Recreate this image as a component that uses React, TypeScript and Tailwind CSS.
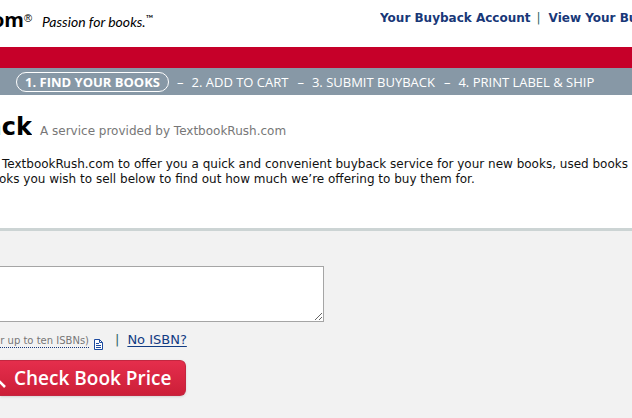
import { Fragment } from "react";

const steps = ["2. ADD TO CART", "3. SUBMIT BUYBACK", "4. PRINT LABEL & SHIP"];

const Header = () => (
    <header className="flex h-[47px] items-start justify-between overflow-hidden whitespace-nowrap bg-white">
        <div className="flex items-start text-black">
            <div className="flex w-6 shrink-0 justify-end overflow-hidden pt-2 font-['Open_Sans',sans-serif] text-xl leading-6 font-bold">om</div>
            <span className="w-[18px] pt-2 font-['Liberation_Sans',sans-serif] text-[11px] leading-5">®</span>
            <span className="pt-3 font-['Lato',sans-serif] text-sm leading-5 italic">Passion for books.</span>
            <span className="pt-2 font-['Lato',sans-serif] text-[10px] leading-5">™</span>
        </div>
        <nav className="flex w-[252px] shrink-0 overflow-hidden pt-[10px] text-xs leading-4 font-bold text-[#183878]">
            <a href="#account">Your Buyback Account</a>
            <span className="pr-2 pl-[6px] font-normal text-[#2e6468]">|</span>
            <a href="#cart">View Your Buyback</a>
        </nav>
    </header>
);

const StepBar = () => (
    <ol className="flex h-[27px] items-center gap-2 overflow-hidden whitespace-nowrap bg-[#8798a6] pl-4 font-['Open_Sans',sans-serif] text-[13px] leading-5 text-white">
        <li className="flex h-5 items-center rounded-full border border-white px-2 font-bold">1. FIND YOUR BOOKS</li>
        {steps.map((step) => (
            <Fragment key={step}>
                <li aria-hidden="true">–</li>
                <li className="pr-px">{step}</li>
            </Fragment>
        ))}
    </ol>
);

const NotesIcon = () => (
    <svg width="9" height="11" viewBox="0 0 9 11" fill="none" stroke="#1c4ba0" className="shrink-0" aria-hidden="true">
        <path d="M.5.5h5l3 3v7h-8z" fill="#fff" />
        <path d="M5.5.5v3h3M2 4.5h3M2 6.5h5M2 8.5h5" />
    </svg>
);

const Intro = () => (
    <section className="h-[133px] overflow-hidden whitespace-nowrap bg-white pt-4">
        <div className="flex items-baseline gap-2">
            <h1 className="flex w-8 shrink-0 justify-end overflow-hidden text-2xl leading-8 font-bold text-black">ack</h1>
            <span className="text-xs leading-4 text-[#777]">A service provided by TextbookRush.com</span>
        </div>
        <p className="pt-[14px] text-xs leading-[15px] text-[#111]">
            <span className="block pl-[2px]">TextbookRush.com to offer you a quick and convenient buyback service for your new books, used books</span>
            <span className="-ml-px block">oks you wish to sell below to find out how much we’re offering to buy them for.</span>
        </p>
    </section>
);

const IsbnForm = () => (
    <form className="flex-1 border-t-[3px] border-[#ccd4d4] bg-[#f2f2f2] pt-[35px]" onSubmit={(e) => e.preventDefault()}>
        <textarea
            id="isbns"
            aria-labelledby="isbn-hint"
            className="block h-14 w-[324px] max-w-full resize border border-l-0 border-[#a5a5a5] bg-white p-1 text-xs outline-none"
        />
        <div className="flex h-[38px] items-center whitespace-nowrap pb-[2px] text-[13px] leading-4">
            <div className="flex w-[89px] shrink-0 justify-end overflow-hidden pt-[2px]">
                <label id="isbn-hint" htmlFor="isbns" className="border-b border-dotted border-[#183878] text-[10px] leading-3 text-[#777]">r up to ten ISBNs)</label>
            </div>
            <span className="flex pt-2 pl-[5px]"><NotesIcon /></span>
            <span className="pl-3 text-[#2e6468]">|</span>
            <a href="#no-isbn" className="pl-2 text-[#123c83] underline underline-offset-2">No ISBN?</a>
        </div>
        <button
            type="submit"
            className="flex h-9 w-[186px] items-center gap-2 overflow-hidden rounded-r-md border border-l-0 border-[#c32740] bg-linear-to-b from-[#e52e4c] to-[#cc1e38] font-['Open_Sans',sans-serif] text-[19px] font-semibold whitespace-nowrap text-white shadow-sm"
        >
            <svg width="6" height="20" viewBox="0 0 6 20" fill="none" stroke="#fff" strokeWidth="2.5" className="shrink-0" aria-hidden="true">
                <path d="M-3 11L5 19" />
            </svg>
            Check Book Price
        </button>
    </form>
);

export default function App() {
    return (
        <div className="flex min-h-screen flex-col overflow-hidden bg-white font-['DejaVu_Sans',sans-serif]">
            <Header />
            <div className="h-[21px] bg-[#c60029]" />
            <StepBar />
            <Intro />
            <IsbnForm />
        </div>
    );
}
